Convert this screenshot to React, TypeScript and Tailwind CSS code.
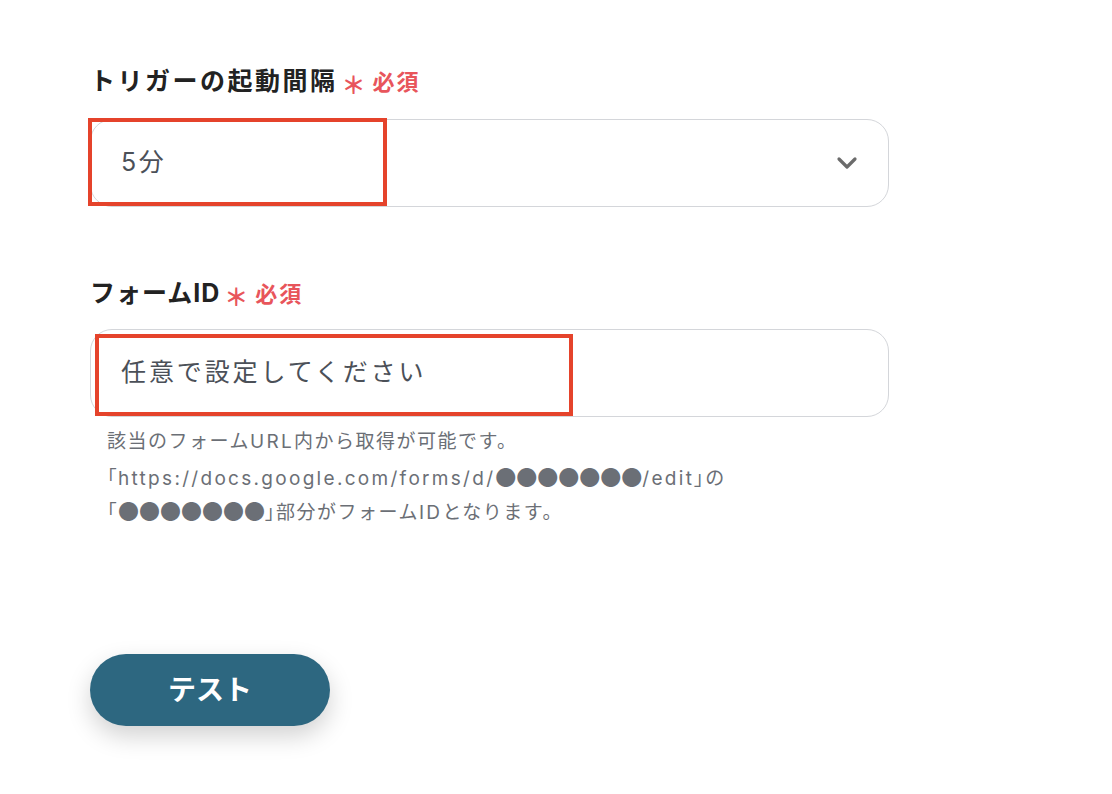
import React from 'react';

const font = "font-['Inter','Noto_Sans_CJK_JP',sans-serif]";
const cjk = "font-['Noto_Sans_CJK_JP',sans-serif]";

function Required() {
  return (
    <span className="flex items-center gap-[7px] text-[#e8555b] font-bold">
      <span className={`${cjk} text-[24px] leading-none translate-y-[2px]`}>＊</span>
      <span className="text-[22px] tracking-[2px]">必須</span>
    </span>
  );
}

function FieldLabel({ children, tracking }: { children: React.ReactNode; tracking: string }) {
  return (
    <div className="flex items-center gap-[4px] h-[36px]">
      <span className={`text-[25px] font-bold text-[#222] ${tracking}`}>{children}</span>
      <Required />
    </div>
  );
}

function Br({ children }: { children: React.ReactNode }) {
  return <span className={`${cjk} [font-feature-settings:'palt']`}>{children}</span>;
}

function Dots() {
  return <span className={`${cjk} text-[21px] leading-none tracking-[0px]`}>●●●●●●●</span>;
}

function Latin({ children }: { children: React.ReactNode }) {
  return <span className="tracking-[2.3px]">{children}</span>;
}

function App() {
  return (
    <div className={`min-h-screen bg-white ${font}`}>
      <div className="pt-[64px] pl-[90px] w-[889px]">
        {/* トリガーの起動間隔 */}
        <FieldLabel tracking="tracking-[2.5px]">トリガーの起動間隔</FieldLabel>
        <div className="relative mt-[19px] h-[88px] rounded-[22px] border border-[#d4d6da] flex items-center justify-between pl-[30px] pr-[30px]">
          <span className="text-[25px] tracking-[2.5px] text-[#4b5058]">5分</span>
          <svg width="22" height="14" viewBox="0 0 22 14" fill="none">
            <path d="M3 3l8 8 8-8" stroke="#6b6b6b" strokeWidth="3.2" strokeLinecap="round" strokeLinejoin="round" />
          </svg>
          <div className="absolute left-[-3px] top-[-2px] w-[299px] h-[88px] border-[4px] border-[#e5432b]" />
        </div>

        {/* フォームID */}
        <div className="mt-[69px]">
          <FieldLabel tracking="tracking-[1px]">フォームID</FieldLabel>
        </div>
        <div className="relative mt-[17px] h-[88px] rounded-[22px] border border-[#d4d6da] flex items-center pl-[30px]">
          <span className="text-[25px] tracking-[2.9px] text-[#4b5058]">任意で設定してください</span>
          <div className="absolute left-[4px] top-[4px] w-[478px] h-[82px] border-[4px] border-[#e5432b]" />
        </div>
        <div className="mt-[8px] pl-[17px] text-[19px] leading-[34.5px] tracking-[1.5px] text-[#6b6f76]">
          <p className="h-[34.5px]">
            該当のフォーム<Latin>URL</Latin>内から取得が可能です。
          </p>
          <p className="h-[34.5px]">
            <Br>「</Br>
            <Latin>https://docs.google.com/forms/d/</Latin>
            <Dots />
            <Latin>/edit</Latin>
            <Br>」</Br>の
          </p>
          <p className="h-[34.5px]">
            <Br>「</Br>
            <Dots />
            <Br>」</Br>部分がフォーム<Latin>ID</Latin>となります。
          </p>
        </div>

        <button className="mt-[125px] w-[240px] h-[72px] rounded-full bg-[#2d6780] text-white text-[28px] font-bold shadow-[0_10px_24px_rgba(0,0,0,0.18)]">
          テスト
        </button>
      </div>
    </div>
  );
}

export default App;
